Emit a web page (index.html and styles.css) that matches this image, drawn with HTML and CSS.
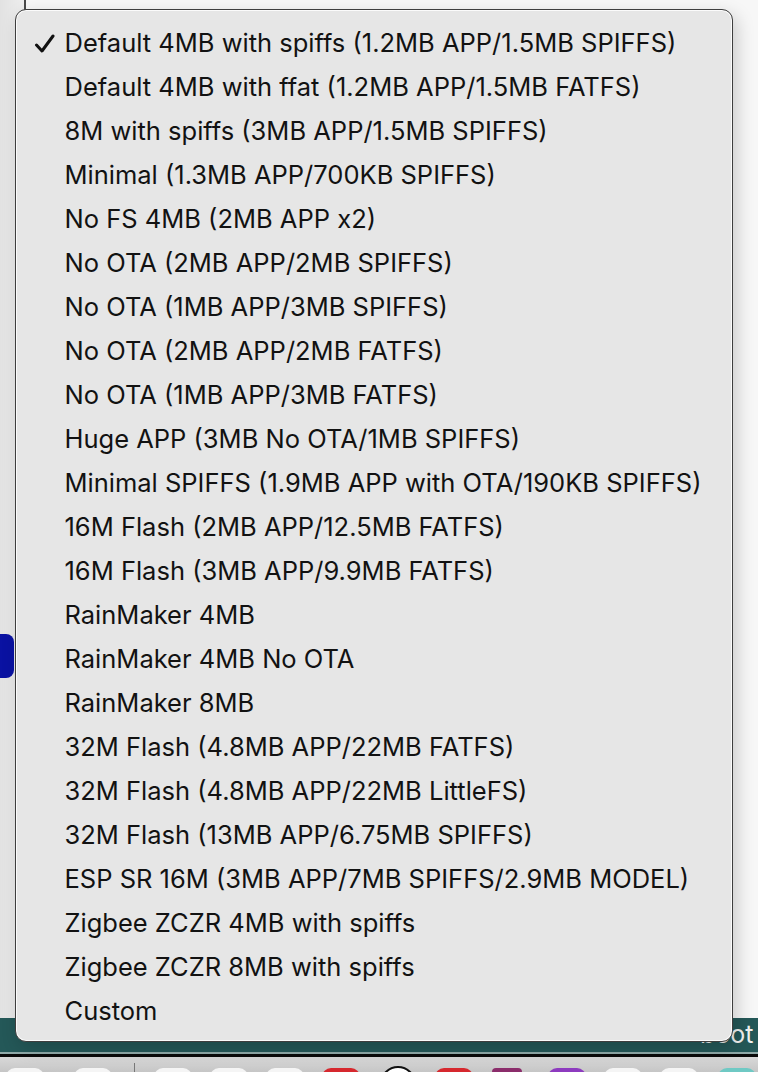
FILE: index.html
```html
<!DOCTYPE html>
<html>
<head>
<meta charset="utf-8">
<link rel="stylesheet" href="styles.css">
</head>
<body>
<div class="screen">
  <div class="desktop">
    <div class="side"></div>
    <div class="window"></div>
  </div>
  <div class="blue-tab"></div>
  <div class="statusbar"><span class="status-text">boot</span></div>
  <div class="dock">
    <span class="dock-icon white" style="left:6px"></span>
    <span class="dock-icon white" style="left:74px"></span>
    <span class="dock-sep"></span>
    <span class="dock-icon white" style="left:154px"></span>
    <span class="dock-icon white" style="left:210px"></span>
    <span class="dock-icon white" style="left:266px"></span>
    <span class="dock-icon red" style="left:322px"></span>
    <span class="dock-icon circle" style="left:380px"></span>
    <span class="dock-icon red" style="left:435px"></span>
    <span class="dock-icon maroon" style="left:492px"></span>
    <span class="dock-icon purple" style="left:548px"></span>
    <span class="dock-icon white" style="left:604px"></span>
    <span class="dock-icon white" style="left:660px"></span>
    <span class="dock-icon teal" style="left:718px"></span>
  </div>

  <div class="menu">
    <div class="item checked"><svg class="check" width="22" height="20" viewBox="0 0 22 20"><polyline points="2.5,11 8,17 19,2" fill="none" stroke="#111" stroke-width="3" stroke-linecap="round" stroke-linejoin="round"/></svg>Default 4MB with spiffs (1.2MB APP/1.5MB SPIFFS)</div>
    <div class="item">Default 4MB with ffat (1.2MB APP/1.5MB FATFS)</div>
    <div class="item">8M with spiffs (3MB APP/1.5MB SPIFFS)</div>
    <div class="item">Minimal (1.3MB APP/700KB SPIFFS)</div>
    <div class="item">No FS 4MB (2MB APP x2)</div>
    <div class="item">No OTA (2MB APP/2MB SPIFFS)</div>
    <div class="item">No OTA (1MB APP/3MB SPIFFS)</div>
    <div class="item">No OTA (2MB APP/2MB FATFS)</div>
    <div class="item">No OTA (1MB APP/3MB FATFS)</div>
    <div class="item">Huge APP (3MB No OTA/1MB SPIFFS)</div>
    <div class="item">Minimal SPIFFS (1.9MB APP with OTA/190KB SPIFFS)</div>
    <div class="item">16M Flash (2MB APP/12.5MB FATFS)</div>
    <div class="item">16M Flash (3MB APP/9.9MB FATFS)</div>
    <div class="item">RainMaker 4MB</div>
    <div class="item">RainMaker 4MB No OTA</div>
    <div class="item">RainMaker 8MB</div>
    <div class="item">32M Flash (4.8MB APP/22MB FATFS)</div>
    <div class="item">32M Flash (4.8MB APP/22MB LittleFS)</div>
    <div class="item">32M Flash (13MB APP/6.75MB SPIFFS)</div>
    <div class="item">ESP SR 16M (3MB APP/7MB SPIFFS/2.9MB MODEL)</div>
    <div class="item">Zigbee ZCZR 4MB with spiffs</div>
    <div class="item">Zigbee ZCZR 8MB with spiffs</div>
    <div class="item">Custom</div>
  </div>
</div>
</body>
</html>
```

FILE: styles.css
```css
html, body {
  margin: 0;
  padding: 0;
}
body {
  width: 758px;
  height: 1072px;
  overflow: hidden;
  background: #f4f4f4;
  font-family: Inter, "Liberation Sans", Arial, sans-serif;
}
.screen {
  position: relative;
  width: 758px;
  height: 1072px;
  overflow: hidden;
}
.desktop {
  display: flex;
  height: 1018px;
}
.side {
  width: 26px;
  background: linear-gradient(to right, #e2e2e2, #eeeeee);
  border-right: 2px solid #4a4a4a;
  box-sizing: border-box;
}
.window {
  flex: 1;
  background: #f7f7f7;
}
.blue-tab {
  position: absolute;
  left: -8px;
  top: 634px;
  width: 22px;
  height: 44px;
  border-radius: 8px;
  background: #0a12a2;
}
.statusbar {
  position: absolute;
  left: 0;
  top: 1018px;
  width: 758px;
  height: 34px;
  background: #245858;
  border-bottom: 2px solid #8fa9a8;
}
.status-text {
  position: absolute;
  left: 700px;
  top: 1px;
  font-size: 25px;
  line-height: 30px;
  color: #f2f2f2;
}
.dock {
  position: absolute;
  left: 0;
  top: 1054px;
  width: 758px;
  height: 18px;
  border-top: 3px solid #0a0a0a;
  background: linear-gradient(#d8d8d8, #c6c6c6);
  box-sizing: border-box;
}
.dock-icon {
  position: absolute;
  top: 11px;
  width: 38px;
  height: 38px;
  border-radius: 9px;
}
.dock-icon.white { background: #f5f5f5; }
.dock-icon.red { background: #d6282e; }
.dock-icon.maroon { background: #8b2d6b; border-radius: 4px; width: 30px; }
.dock-icon.purple { background: #8d3bbf; }
.dock-icon.teal { background: #6fc9c4; }
.dock-icon.circle {
  background: #fff;
  border: 2px solid #111;
  border-radius: 50%;
  width: 32px;
  height: 32px;
  top: 9px;
}
.dock-sep {
  position: absolute;
  left: 134px;
  top: 6px;
  width: 1px;
  height: 12px;
  background: #777;
}
.menu {
  position: absolute;
  left: 15px;
  top: 9px;
  width: 718px;
  height: 1033px;
  box-sizing: border-box;
  background: #e6e6e6;
  border: 1.5px solid #3e3e3e;
  border-radius: 11px;
  box-shadow: inset 0 0 0 1px #fbfbfb, 4px 6px 18px rgba(0,0,0,0.18);
  padding: 11px 0 0 0;
  display: flex;
  flex-direction: column;
}
.item {
  position: relative;
  height: 44px;
  line-height: 44px;
  padding-left: 48.5px;
  font-size: 25.5px;
  color: #121212;
  white-space: nowrap;
}
.check {
  position: absolute;
  left: 18px;
  top: 13px;
}
```
